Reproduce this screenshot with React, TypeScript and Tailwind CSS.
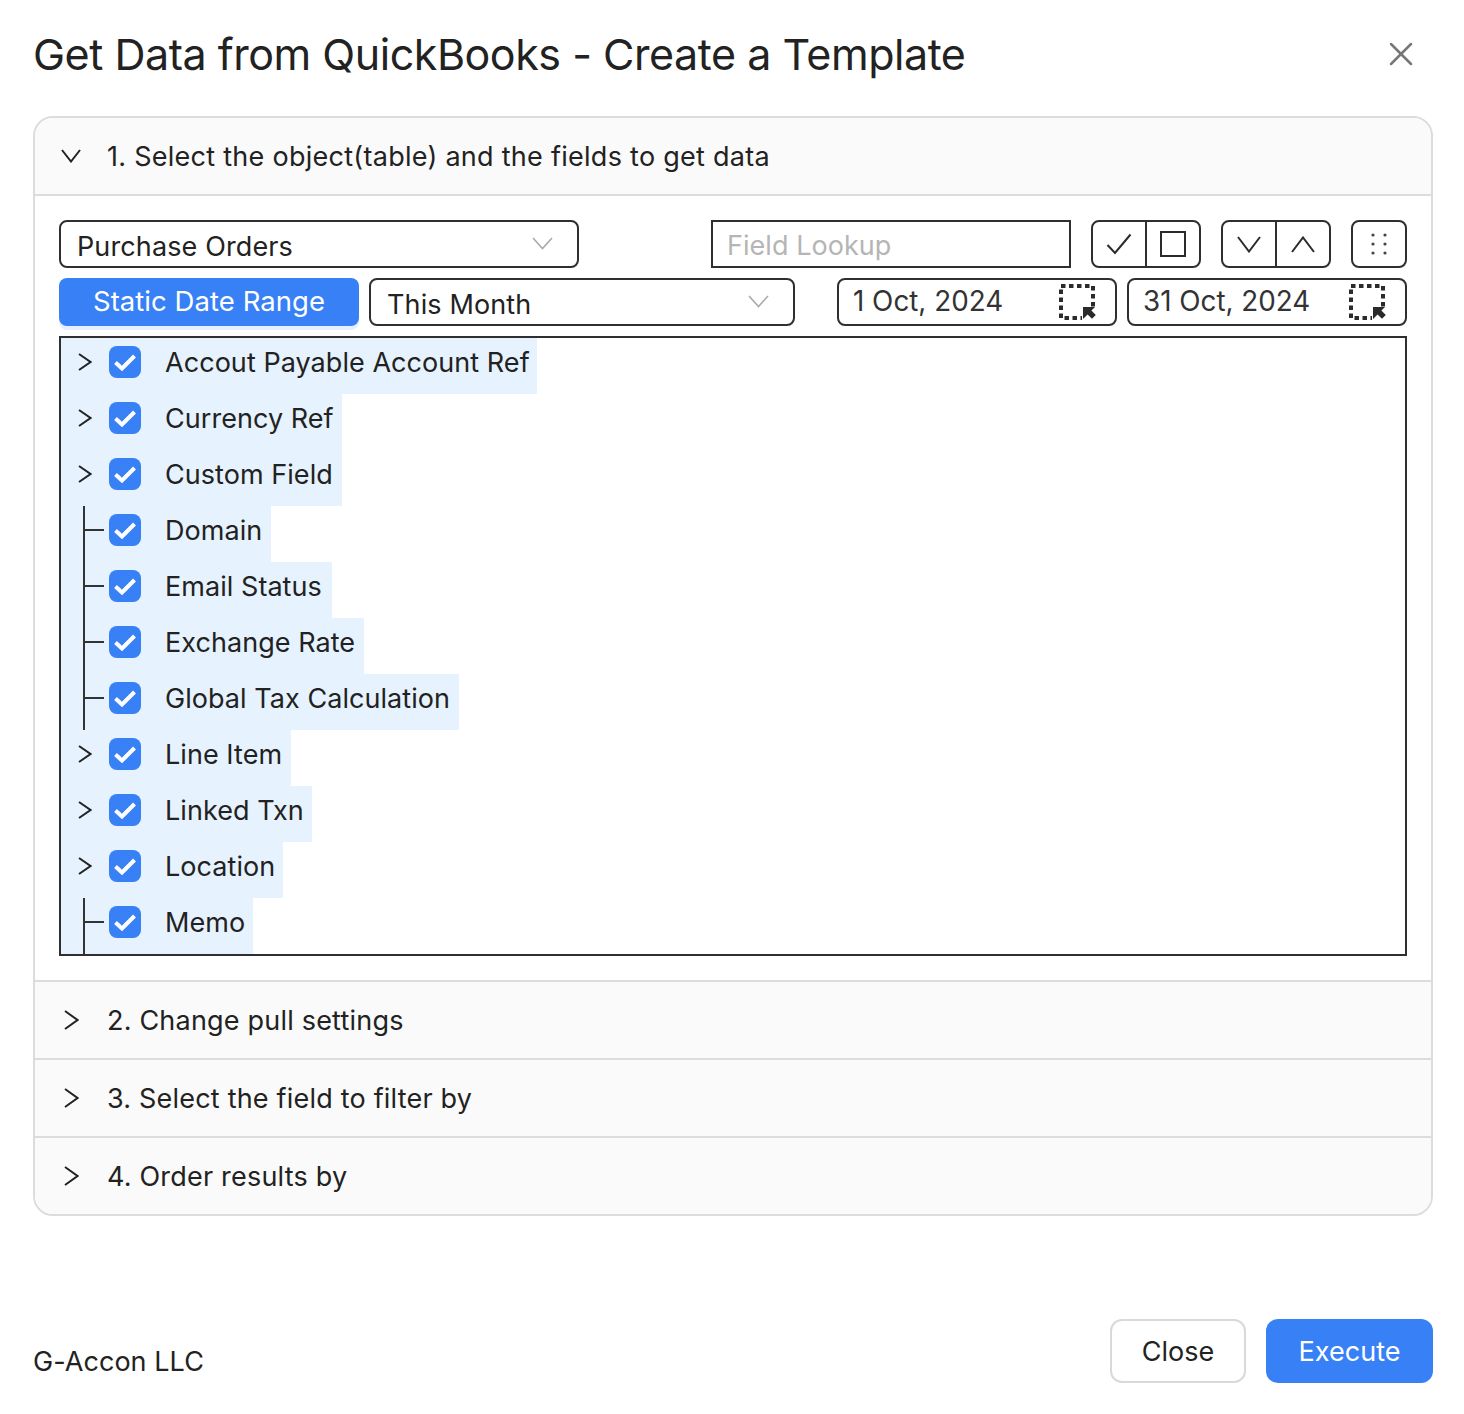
import { X } from 'lucide-react';

const fields = [
  { name: 'Accout Payable Account Ref', expandable: true, w: 'w-[476px]' },
  { name: 'Currency Ref', expandable: true, w: 'w-[281px]' },
  { name: 'Custom Field', expandable: true, w: 'w-[281px]' },
  { name: 'Domain', expandable: false, w: 'w-[210px]' },
  { name: 'Email Status', expandable: false, w: 'w-[271px]' },
  { name: 'Exchange Rate', expandable: false, w: 'w-[303px]' },
  { name: 'Global Tax Calculation', expandable: false, w: 'w-[398px]' },
  { name: 'Line Item', expandable: true, w: 'w-[230px]' },
  { name: 'Linked Txn', expandable: true, w: 'w-[251px]' },
  { name: 'Location', expandable: true, w: 'w-[222px]' },
  { name: 'Memo', expandable: false, w: 'w-[192px]' },
];

function RangeIcon() {
  return (
    <svg width="38" height="38" viewBox="0 0 38 38" fill="none">
      <path d="M3 3H35V35H3Z" stroke="#2b2b2b" strokeWidth="4" strokeDasharray="4.5 3.5" />
      <rect x="24" y="24" width="14" height="14" fill="#fff" />
      <path d="M25 24h12l-3.6 3.6 4.4 4.4-3.8 3.8-4.4-4.4L25 36z" fill="#2b2b2b" />
    </svg>
  );
}

function GripIcon() {
  return (
    <svg width="20" height="24" viewBox="0 0 20 24" fill="#444">
      <circle cx="4" cy="3" r="1.6" />
      <circle cx="16" cy="3" r="1.6" />
      <circle cx="4" cy="12" r="1.6" />
      <circle cx="16" cy="12" r="1.6" />
      <circle cx="4" cy="21" r="1.6" />
      <circle cx="16" cy="21" r="1.6" />
    </svg>
  );
}

function ChevronRightThin({ w, h }: { w: number; h: number }) {
  return (
    <svg width={w} height={h} viewBox={`0 0 ${w} ${h}`} fill="none" stroke="#222" strokeWidth="2">
      <path d={`M1 1L${w - 1.5} ${h / 2}L1 ${h - 1}`} />
    </svg>
  );
}

// points down, flip with className for the up one
function ChevronDownThin({ w, h, color = '#2b2b2b', sw = 2, className }: { w: number; h: number; color?: string; sw?: number; className?: string }) {
  return (
    <svg width={w} height={h} viewBox={`0 0 ${w} ${h}`} fill="none" stroke={color} strokeWidth={sw} className={className}>
      <path d={`M1 1L${w / 2} ${h - 1.5}L${w - 1} 1`} />
    </svg>
  );
}

function Select({ label, className }: { label: string; className: string }) {
  return (
    <div className={`h-12 flex items-center justify-between pl-4 pr-6 border-2 border-[#2f2f2f] rounded-lg text-[#222] ${className}`}>
      <span className="mt-1 pt-0.5 tracking-[0.12px]">{label}</span>
      <ChevronDownThin w={21} h={13} color="#aaa" sw={1.6} className="-mt-0.5" />
    </div>
  );
}

function DateBox({ value, className }: { value: string; className: string }) {
  return (
    <div className={`h-12 w-[280px] flex items-center justify-between pl-3.5 pr-[19px] border-2 border-[#2f2f2f] rounded-lg text-[#333] text-[27.8px] tracking-normal ${className}`}>
      <span>{value}</span>
      <RangeIcon />
    </div>
  );
}

function FieldRow({ name, expandable, w }: { name: string; expandable: boolean; w: string }) {
  return (
    <div className={`h-14 pb-2 flex items-center shrink-0 bg-[#e6f3fe] ${w}`}>
      <div className="relative w-12 h-12 flex items-center shrink-0 pl-[17px]">
        {expandable ? (
          <ChevronRightThin w={14} h={18} />
        ) : (
          <>
            <div className="absolute left-[22px] top-0 w-0.5 h-14 bg-[#333]" />
            <div className="absolute left-6 top-[23px] w-[19px] h-0.5 bg-[#333]" />
          </>
        )}
      </div>
      <div className="w-8 h-8 rounded-lg bg-[#3780f6] flex items-center justify-center shrink-0">
        <svg width="22" height="17" viewBox="0 0 22 17" fill="none" stroke="#fff" strokeWidth="4">
          <path d="M1.5 8.5L8 14.5L20.5 2" />
        </svg>
      </div>
      <span className="ml-6 pt-0.5 text-[#222] whitespace-nowrap">{name}</span>
    </div>
  );
}

function SectionHeader({ label, open }: { label: string; open?: boolean }) {
  return (
    <div className="h-[76px] flex items-center bg-[#fafafa] shrink-0">
      <div className="w-[72px] flex items-center justify-center shrink-0">
        {open ? <ChevronDownThin w={20} h={14} color="#222" /> : <ChevronRightThin w={15} h={20} />}
      </div>
      <span className={`pt-0.5 text-[#222] ${open ? 'tracking-[0.27px]' : 'tracking-[0.2px]'}`}>{label}</span>
    </div>
  );
}

export default function App() {
  return (
    <div className="w-[1464px] h-[1414px] bg-white font-['Inter','Liberation_Sans',sans-serif] text-[27px] tracking-[0.05px] flex flex-col pl-[33px] overflow-hidden">
      <div className="w-[1400px] h-[116px] flex items-start justify-between shrink-0">
        <h1 className="mt-[24px] text-[43px] leading-[60px] font-normal text-[#222] tracking-[-0.47px] whitespace-nowrap">
          Get Data from QuickBooks - Create a Template
        </h1>
        <X size={40} strokeWidth={1.5} className="mt-[34px] mr-[12px] text-[#777]" />
      </div>

      <div className="w-[1400px] h-[1100px] border-2 border-[#dcdcdc] rounded-[20px] overflow-hidden flex flex-col shrink-0">
        <SectionHeader label="1. Select the object(table) and the fields to get data" open />
        <div className="border-t-2 border-[#dcdcdc] h-[786px] px-6 pt-6 flex flex-col gap-2.5 shrink-0">
          <div className="flex h-12 items-center">
            <Select label="Purchase Orders" className="w-[520px]" />
            <div className="ml-[132px] w-[360px] h-12 flex items-center pl-3.5 border-2 border-[#2f2f2f] text-[#b5b5b5]">
              <span className="mt-0.5 pt-0.5">Field Lookup</span>
            </div>
            <div className="ml-5 w-[110px] h-12 flex border-2 border-[#2f2f2f] rounded-lg">
              <div className="w-[54px] flex items-center justify-center border-r-2 border-[#2f2f2f]">
                <svg width="26" height="22" viewBox="0 0 26 22" fill="none" stroke="#2b2b2b" strokeWidth="2">
                  <path d="M1.5 12L9 20L24.5 1.5" />
                </svg>
              </div>
              <div className="flex-1 flex items-center justify-center">
                <div className="w-[26px] h-[26px] border-2 border-[#2b2b2b]" />
              </div>
            </div>
            <div className="ml-5 w-[110px] h-12 flex border-2 border-[#2f2f2f] rounded-lg">
              <div className="w-[54px] flex items-center justify-center border-r-2 border-[#2f2f2f]">
                <ChevronDownThin w={24} h={17} />
              </div>
              <div className="flex-1 flex items-center justify-center">
                <ChevronDownThin w={24} h={17} className="rotate-180" />
              </div>
            </div>
            <div className="ml-5 w-14 h-12 flex items-center justify-center border-2 border-[#2f2f2f] rounded-lg">
              <GripIcon />
            </div>
          </div>

          <div className="flex h-12 items-center">
            <div className="w-[300px] h-12 flex items-center justify-center rounded-lg bg-[#3780f6] text-white text-[27.5px] shadow-[0_4px_0_#e6f0fd]">
              Static Date Range
            </div>
            <Select label="This Month" className="ml-2.5 w-[426px]" />
            <DateBox value="1 Oct, 2024" className="ml-[42px]" />
            <DateBox value="31 Oct, 2024" className="ml-2.5" />
          </div>

          <div className="h-[620px] border-2 border-[#2f2f2f] flex flex-col overflow-hidden">
            {fields.map((f) => (
              <FieldRow key={f.name} {...f} />
            ))}
          </div>
        </div>
        <div className="border-t-2 border-[#dcdcdc]">
          <SectionHeader label="2. Change pull settings" />
        </div>
        <div className="border-t-2 border-[#dcdcdc]">
          <SectionHeader label="3. Select the field to filter by" />
        </div>
        <div className="border-t-2 border-[#dcdcdc]">
          <SectionHeader label="4. Order results by" />
        </div>
      </div>

      <div className="w-[1400px] mt-[103px] flex items-start justify-between">
        <span className="mt-[23px] text-[#222]">G-Accon LLC</span>
        <div className="flex gap-5">
          <div className="w-[136px] h-16 pt-0.5 flex items-center justify-center border-2 border-[#d9d9d9] rounded-xl text-[#222]">Close</div>
          <div className="w-[167px] h-16 pt-0.5 flex items-center justify-center rounded-xl bg-[#3780f6] text-white">Execute</div>
        </div>
      </div>
    </div>
  );
}
